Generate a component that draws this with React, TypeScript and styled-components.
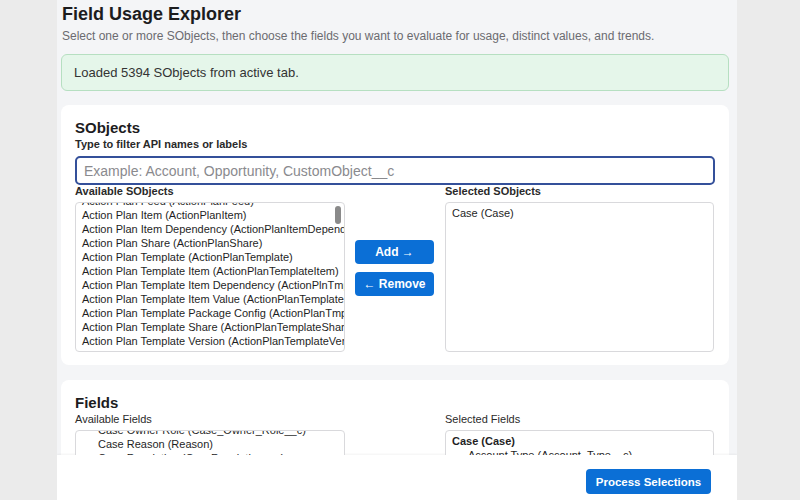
import { createGlobalStyle } from "styled-components";
import styled from "styled-components";

const GlobalStyle = createGlobalStyle`
	html, body {
		margin: 0;
		padding: 0;
		background: #ebebeb;
		font-family: "Liberation Sans", Arial, sans-serif;
		color: #1d1d1f;
	}
`;

const sobjects: string[] = [
	"Action Plan Feed (ActionPlanFeed)",
	"Action Plan Item (ActionPlanItem)",
	"Action Plan Item Dependency (ActionPlanItemDependency)",
	"Action Plan Share (ActionPlanShare)",
	"Action Plan Template (ActionPlanTemplate)",
	"Action Plan Template Item (ActionPlanTemplateItem)",
	"Action Plan Template Item Dependency (ActionPlnTmplItmDependency)",
	"Action Plan Template Item Value (ActionPlanTemplateItemValue)",
	"Action Plan Template Package Config (ActionPlanTmplPackageConfig)",
	"Action Plan Template Share (ActionPlanTemplateShare)",
	"Action Plan Template Version (ActionPlanTemplateVersion)",
	"Action View Template (ActionViewTemplate)",
];

const fields: string[] = [
	"Case Owner Role (Case_Owner_Role__c)",
	"Case Reason (Reason)",
	"Case Resolution (CaseResolution__c)",
];

const Page = styled.div`
	width: 680px;
	height: 500px;
	margin-left: 57px;
	background: #f4f5f7;
	display: flex;
	flex-direction: column;
	overflow: hidden;
`;

const Scroll = styled.div`
	flex: 1;
	overflow: hidden;
	padding: 4px 8px 0 4px;
`;

const Title = styled.h1`
	margin: 0 0 0 1px;
	font-size: 18px;
	line-height: 20px;
	font-weight: 700;
	color: #1c1c1e;
`;

const Subtitle = styled.p`
	margin: 5px 0 0 1px;
	font-size: 12px;
	color: #6b6b70;
`;

const Banner = styled.div`
	margin-top: 11px;
	height: 37px;
	box-sizing: border-box;
	display: flex;
	align-items: center;
	padding: 0 12px;
	background: #e5f6ea;
	border: 1px solid #b6dfc1;
	border-radius: 6px;
	font-size: 13px;
	color: #333;
`;

const Card = styled.section<{ $top: number }>`
	margin-top: ${(p) => p.$top}px;
	background: #fff;
	border-radius: 8px;
	padding: 14px 14px 13px;
`;

const CardTitle = styled.h2`
	margin: 0;
	font-size: 15px;
	line-height: 18px;
	font-weight: 700;
	color: #1c1c1e;
`;

const Label = styled.div<{ $bold?: boolean }>`
	font-size: 11px;
	line-height: 14px;
	font-weight: ${(p) => (p.$bold ? 700 : 400)};
	color: #2a2a2a;
`;

const FilterInput = styled.input`
	display: block;
	width: 100%;
	box-sizing: border-box;
	margin-top: 5px;
	height: 29px;
	padding: 0 7px;
	border: 2px solid #34509a;
	border-radius: 5px;
	font-family: "Liberation Sans", Arial, sans-serif;
	font-size: 14px;
	outline: none;
	&::placeholder {
		color: #8a8a8e;
	}
`;

const Picker = styled.div<{ $top: number }>`
	display: grid;
	grid-template-columns: 270px 100px 269px;
	margin-top: ${(p) => p.$top}px;
`;

const Column = styled.div`
	display: flex;
	flex-direction: column;
`;

const ListBox = styled.div<{ $height: number }>`
	position: relative;
	margin-top: 4px;
	height: ${(p) => p.$height}px;
	box-sizing: border-box;
	border: 1px solid #d9d9dc;
	border-radius: 4px;
	overflow: hidden;
	background: #fff;
`;

const ListInner = styled.div<{ $shift: number }>`
	margin-top: ${(p) => p.$shift}px;
	padding: 0 6px;
`;

const Item = styled.div<{ $indent?: number; $bold?: boolean }>`
	font-size: 11px;
	line-height: 14px;
	white-space: nowrap;
	color: #1f1f1f;
	padding-left: ${(p) => p.$indent ?? 0}px;
	font-weight: ${(p) => (p.$bold ? 700 : 400)};
`;

const Thumb = styled.div`
	position: absolute;
	right: 3px;
	top: 3px;
	width: 6px;
	height: 18px;
	border-radius: 3px;
	background: #8a8a8a;
`;

const Buttons = styled.div`
	display: flex;
	flex-direction: column;
	gap: 8px;
	padding: 56px 0 0 10px;
`;

const BlueButton = styled.button<{ $w: number }>`
	width: ${(p) => p.$w}px;
	height: 24px;
	border: none;
	border-radius: 4px;
	background: #0b6fd6;
	color: #fff;
	font-family: "Liberation Sans", Arial, sans-serif;
	font-size: 12px;
	font-weight: 700;
	padding: 0;
	cursor: pointer;
`;

const Footer = styled.footer`
	height: 45px;
	flex-shrink: 0;
	background: #fff;
	display: flex;
	align-items: center;
	justify-content: flex-end;
	padding-right: 26px;
	box-shadow: 0 -1px 2px rgba(0, 0, 0, 0.05);
`;

const ProcessButton = styled(BlueButton)`
	height: 25px;
	margin-top: 8px;
	font-size: 11.5px;
`;

export default function App(): JSX.Element {
	return (
		<>
			<GlobalStyle />
			<Page>
				<Scroll>
					<Title>Field Usage Explorer</Title>
					<Subtitle>
						Select one or more SObjects, then choose the fields you want to
						evaluate for usage, distinct values, and trends.
					</Subtitle>
					<Banner>Loaded 5394 SObjects from active tab.</Banner>

					<Card $top={14}>
						<CardTitle>SObjects</CardTitle>
						<Label $bold>Type to filter API names or labels</Label>
						<FilterInput placeholder="Example: Account, Opportunity, CustomObject__c" />
						<Picker $top={-1}>
							<Column>
								<Label $bold>Available SObjects</Label>
								<ListBox $height={150}>
									<ListInner $shift={-9}>
										{sobjects.map((s) => (
											<Item key={s}>{s}</Item>
										))}
									</ListInner>
									<Thumb />
								</ListBox>
							</Column>
							<Buttons>
								<BlueButton $w={79}>Add →</BlueButton>
								<BlueButton $w={79}>← Remove</BlueButton>
							</Buttons>
							<Column>
								<Label $bold>Selected SObjects</Label>
								<ListBox $height={150}>
									<ListInner $shift={3}>
										<Item>Case (Case)</Item>
									</ListInner>
								</ListBox>
							</Column>
						</Picker>
					</Card>

					<Card $top={15}>
						<CardTitle>Fields</CardTitle>
						<Picker $top={0}>
							<Column>
								<Label>Available Fields</Label>
								<ListBox $height={150}>
									<ListInner $shift={-8}>
										{fields.map((f) => (
											<Item key={f} $indent={16}>
												{f}
											</Item>
										))}
									</ListInner>
								</ListBox>
							</Column>
							<div />
							<Column>
								<Label>Selected Fields</Label>
								<ListBox $height={150}>
									<ListInner $shift={3}>
										<Item $bold>Case (Case)</Item>
										<Item $indent={16}>Account Type (Account_Type__c)</Item>
									</ListInner>
								</ListBox>
							</Column>
						</Picker>
					</Card>
				</Scroll>
				<Footer>
					<ProcessButton $w={125}>Process Selections</ProcessButton>
				</Footer>
			</Page>
		</>
	);
}
